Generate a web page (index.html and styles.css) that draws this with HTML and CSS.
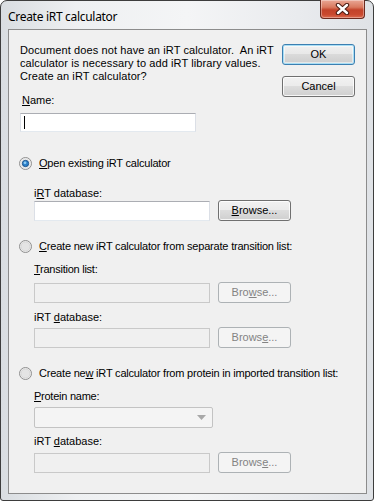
FILE: index.html
```html
<!DOCTYPE html>
<html>
<head>
    <title>Create iRT calculator</title>
    <link rel="stylesheet" href="styles.css">
</head>
<body>
    <div class="window">
        <div class="titlebar">
            <span class="title">Create iRT calculator</span>
            <div class="close">
                <svg width="17" height="12" viewBox="0 0 17 12">
                    <path d="M4 2 L13 10 M13 2 L4 10" stroke="#4a1a12" stroke-width="4.4" stroke-linecap="round"/>
                    <path d="M4 2 L13 10 M13 2 L4 10" stroke="#ffffff" stroke-width="2.4" stroke-linecap="round"/>
                </svg>
            </div>
        </div>

        <div class="client">
            <div class="top">
                <div class="intro">
                    <p class="message">Document does not have an iRT calculator.&nbsp; An iRT<br>calculator is necessary to add iRT library values.<br>Create an iRT calculator?</p>
                    <div class="label name-label"><u>N</u>ame:</div>
                    <div class="textbox name-box"><span class="caret"></span></div>
                </div>
                <div class="actions">
                    <div class="btn default">OK</div>
                    <div class="btn">Cancel</div>
                </div>
            </div>

            <!-- Open existing -->
            <div class="radio-row first">
                <svg class="radio" width="13" height="13" viewBox="0 0 13 13">
                    <circle cx="6.5" cy="6.5" r="6" fill="#f4f4f4" stroke="#8f8f8f"/>
                    <circle cx="6.5" cy="6.5" r="4.6" fill="#ffffff" stroke="#d4d4d4" stroke-width="0.8"/>
                    <circle cx="6.5" cy="6.5" r="3.2" fill="#2a7fc9" stroke="#1b4f85" stroke-width="0.9"/>
                    <circle cx="6" cy="5.8" r="1.4" fill="#8ecbf2"/>
                </svg>
                <span><u>O</u>pen existing iRT calculator</span>
            </div>
            <div class="fields">
                <div class="label db1">i<u>R</u>T database:</div>
                <div class="field-row">
                    <div class="textbox"></div>
                    <div class="btn browse"><u>B</u>rowse...</div>
                </div>
            </div>

            <!-- From transition list -->
            <div class="radio-row">
                <svg class="radio" width="13" height="13" viewBox="0 0 13 13">
                    <circle cx="6.5" cy="6.5" r="6" fill="#f1f1f1" stroke="#8f8f8f"/>
                    <circle cx="6.5" cy="6.5" r="4.6" fill="#e4e4e4" stroke="#d0d0d0" stroke-width="0.8"/>
                </svg>
                <span><u>C</u>reate new iRT calculator from separate transition list:</span>
            </div>
            <div class="fields">
                <div class="label sub-label"><u>T</u>ransition list:</div>
                <div class="field-row tl-row">
                    <div class="textbox disabled"></div>
                    <div class="btn browse disabled">Bro<u>w</u>se...</div>
                </div>
                <div class="label db2">iRT <u>d</u>atabase:</div>
                <div class="field-row db2-row">
                    <div class="textbox disabled"></div>
                    <div class="btn browse disabled">Brows<u>e</u>...</div>
                </div>
            </div>

            <!-- From protein -->
            <div class="radio-row">
                <svg class="radio" width="13" height="13" viewBox="0 0 13 13">
                    <circle cx="6.5" cy="6.5" r="6" fill="#f1f1f1" stroke="#8f8f8f"/>
                    <circle cx="6.5" cy="6.5" r="4.6" fill="#e4e4e4" stroke="#d0d0d0" stroke-width="0.8"/>
                </svg>
                <span>Create ne<u>w</u> iRT calculator from protein in imported transition list:</span>
            </div>
            <div class="fields">
                <div class="label sub-label"><u>P</u>rotein name:</div>
                <div class="combo disabled">
                    <svg width="9" height="5" viewBox="0 0 9 5"><path d="M0 0 H9 L4.5 5 Z" fill="#a8a8a8"/></svg>
                </div>
                <div class="label db3">iRT <u>d</u>atabase:</div>
                <div class="field-row db3-row">
                    <div class="textbox disabled"></div>
                    <div class="btn browse disabled">Brows<u>e</u>...</div>
                </div>
            </div>
        </div>
    </div>
</body>
</html>
```

FILE: styles.css
```css
body {
    margin: 0;
    background: #ffffff;
    font-family: "Liberation Sans", Arial, sans-serif;
    font-size: 11px;
    color: #000;
}
.window {
    width: 374px;
    height: 501px;
    box-sizing: border-box;
    border: 1px solid #3d3d3d;
    border-radius: 7px 7px 3px 3px;
    background: linear-gradient(90deg, #d9dde1 0%, #eef0f2 20%, #f4f5f6 50%, #e9ebee 80%, #dfe2e6 100%);
    display: flex;
    flex-direction: column;
}
.titlebar {
    height: 28px;
    display: flex;
    justify-content: space-between;
    align-items: flex-start;
}
.title {
    font-family: "Noto Sans", sans-serif;
    font-size: 12px;
    letter-spacing: -0.3px;
    line-height: 16px;
    margin: 8px 0 0 7px;
    color: #000;
}
.close {
    width: 45px;
    height: 19px;
    margin: -1px 8px 0 0;
    box-sizing: border-box;
    border: 1px solid #6b2a1f;
    border-top: none;
    border-radius: 0 0 4px 4px;
    background: linear-gradient(#e9a795 0%, #d9795f 40%, #c3432a 55%, #c9492f 80%, #db6a4e 100%);
    box-shadow: inset 0 0 0 1px rgba(255,255,255,0.35);
    display: flex;
    justify-content: center;
    align-items: center;
}
.client {
    flex: 1;
    margin: 0 6px 6px 7px;
    border: 1px solid #8c8c8c;
    background: #f0f0f0;
    padding: 14px 11px 0 11px;
}
.top {
    display: flex;
    justify-content: space-between;
}
.message {
    margin: 0;
    line-height: 13px;
    letter-spacing: 0.1px;
}
.label {
    line-height: 13px;
}
.name-label {
    margin: 11px 0 0 2px;
}
.textbox {
    width: 176px;
    height: 20px;
    box-sizing: border-box;
    background: #fff;
    border: 1px solid #abadb3;
    border-left-color: #dbdfe6;
    border-right-color: #dbdfe6;
    border-bottom-color: #e3e9ef;
    margin-top: 1px;
}
.textbox.disabled {
    background: #f0f0f0;
    border-color: #c9c9c9;
}
.name-box {
    height: 19px;
    margin-top: 6px;
    padding: 2px 0 0 3px;
}
.caret {
    display: block;
    width: 1px;
    height: 13px;
    background: #000;
}
.actions {
    display: flex;
    flex-direction: column;
    gap: 11px;
}
.btn {
    width: 73px;
    height: 21px;
    box-sizing: border-box;
    border: 1px solid #707070;
    border-radius: 3px;
    background: linear-gradient(#f2f2f2 0%, #ebebeb 50%, #dddddd 50%, #cfcfcf 100%);
    box-shadow: inset 0 0 0 1px rgba(255,255,255,0.8);
    display: flex;
    justify-content: center;
    align-items: center;
    line-height: 13px;
}
.btn.default {
    border-color: #3c7fb1;
    box-shadow: inset 0 0 0 1px #a8def5, inset 0 0 0 2px rgba(255,255,255,0.5);
    background: linear-gradient(#f0f0f0 0%, #e8e8e8 50%, #dadada 50%, #cdcdcd 100%);
}
.btn.disabled {
    border-color: #adb2b5;
    background: #f4f4f4;
    box-shadow: none;
    color: #838383;
}
.radio-row {
    display: flex;
    align-items: center;
    height: 13px;
    line-height: 13px;
    letter-spacing: -0.2px;
    margin: 19px 0 0 -1px;
}
.radio-row.first {
    margin-top: 25px;
}
.radio {
    margin-right: 7px;
    flex-shrink: 0;
}
.fields {
    padding-left: 14px;
}
.field-row {
    display: flex;
    align-items: flex-start;
    gap: 8px;
}
.db1 {
    margin-top: 17px;
}
.sub-label {
    margin-top: 10px;
    letter-spacing: -0.25px;
}
.tl-row {
    margin-top: 6px;
}
.db2 {
    margin-top: 8px;
}
.db2-row {
    margin-top: 3px;
}
.combo {
    width: 179px;
    height: 21px;
    box-sizing: border-box;
    margin-top: 4px;
    border: 1px solid #c3c3c3;
    border-radius: 2px;
    background: #f4f4f4;
    display: flex;
    justify-content: flex-end;
    align-items: center;
    padding-right: 6px;
}
.db3 {
    margin-top: 7px;
}
.db3-row {
    margin-top: 4px;
}
```
